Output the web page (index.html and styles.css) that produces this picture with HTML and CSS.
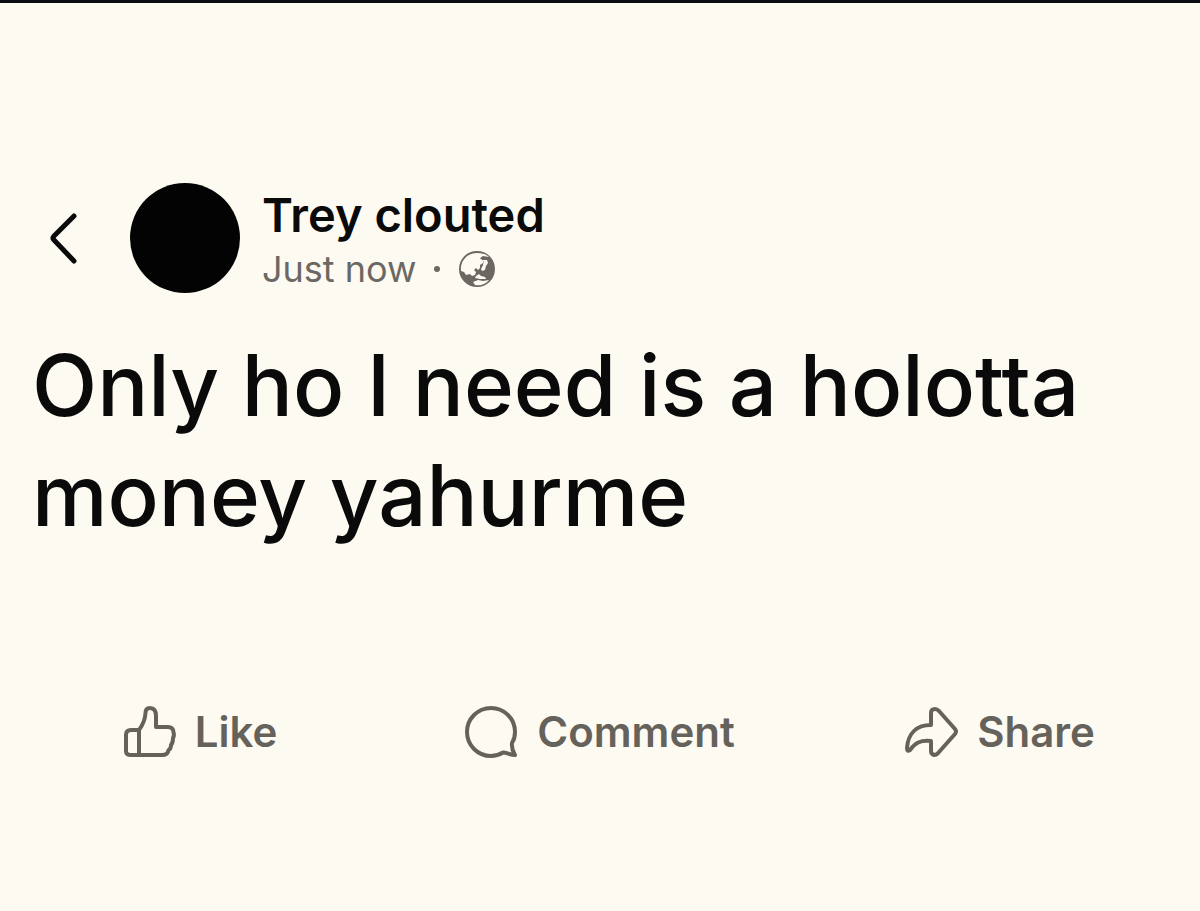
FILE: index.html
```html
<!DOCTYPE html>
<html lang="en">
<head>
    <meta charset="UTF-8">
    <meta name="viewport" content="width=device-width, initial-scale=1.0">
    <title>Trey clouted</title>
    <link rel="stylesheet" href="styles.css">
</head>
<body>
    <main class="post">
        <header class="post-header">
            <button type="button" class="back" aria-label="Back">
                <svg width="30" height="52" viewBox="0 0 30 52" fill="none" stroke="currentColor" stroke-width="5" stroke-linecap="round" stroke-linejoin="round">
                    <path d="M26 4 L6 24 Q4 26 6 28 L26 49"/>
                </svg>
            </button>
            <div class="avatar"></div>
            <div class="author">
                <h1 class="name">Trey clouted</h1>
                <div class="meta">
                    <span>Just now</span>
                    <span class="dot"></span>
                    <svg width="38" height="38" viewBox="0 0 38 38">
                        <circle cx="19" cy="19" r="18" fill="currentColor"/>
                        <path fill="#fdfaf2" d="M19 3 C24 3 28 4 31 7 L25 6 L22 8 L24 10 L26 10 L25 13 L22 15 L22 18 L20 20 L18 18 L16 20 L18 22 L17 25 L14 26 L12 24 L8 25 L6 22 L3 21 C2 11 9 3 19 3 Z"/>
                        <path fill="#fdfaf2" d="M26 10 L29 10 L30 13 L28 16 L27 20 L24 21 L23 19 L25 15 Z"/>
                        <path fill="#fdfaf2" d="M18 26 L21 24 L23 26 L27 27 L28 29 L22 29 L17 28 Z"/>
                        <path fill="#fdfaf2" d="M15 32 L20 30 L25 31 L31 30 C28 34 23 36 17 35 Z"/>
                    </svg>
                </div>
            </div>
        </header>

        <p class="text">Only ho I need is a holotta money yahurme</p>

        <footer class="actions">
            <button type="button" class="action">
                <svg width="54" height="54" viewBox="0 0 54 54" fill="none" stroke="currentColor" stroke-width="4" stroke-linejoin="round" stroke-linecap="round">
                    <path d="M16 25 Q22 17 22.500 8 Q22.500 3 27 3 Q33 3 33 11 V22 H45 Q50 22 50.500 27 Q51.500 31 50 33 Q50 38 48 40 Q48 44 45.500 45 Q45 50 39 50 H8 Q3 50 3 46 V30 Q3 25 8 25 H16 V50"/>
                </svg>
                <span>Like</span>
            </button>
            <button type="button" class="action">
                <svg width="54" height="54" viewBox="0 0 54 54" fill="none" stroke="currentColor" stroke-width="4" stroke-linejoin="round" stroke-linecap="round">
                    <path d="M38 47.500 C34 50 30 51 26 51 A24 24 0 1 1 50 27 C50 31 49 35 47 38 C46.500 42 47.500 46 50 50 C45 50 42 47.500 38 47.500 Z"/>
                </svg>
                <span>Comment</span>
            </button>
            <button type="button" class="action">
                <svg width="54" height="54" viewBox="0 0 54 54" fill="none" stroke="currentColor" stroke-width="4" stroke-linejoin="round" stroke-linecap="round">
                    <path d="M26 20 V8 Q26 4 30 4 Q32 4 34 6 L50 24 Q52 26.500 50 29 L34 47 Q32 50 29 50 Q26 49 26 46 V36 C15 35 10 38 5 45 Q2 47 2 43 C3 28 12 20 26 20 Z"/>
                </svg>
                <span>Share</span>
            </button>
        </footer>
    </main>
</body>
</html>
```
FILE: styles.css
```css
body {
    font-family: Inter, "Liberation Sans", sans-serif;
    background-color: #fdfaf2;
    color: #0a0a0a;
    margin: 0;
    border-top: 3px solid #080c10;
}

.post {
    padding: 180px 0 48px;
}

.post-header {
    display: flex;
    align-items: center;
    padding-left: 48px;
}

button {
    padding: 0;
    border: none;
    background: none;
    color: inherit;
    font-family: inherit;
    cursor: pointer;
}

svg {
    display: block;
    flex-shrink: 0;
}

.avatar {
    width: 110px;
    height: 110px;
    margin: 0 22px 0 52px;
    border-radius: 50%;
    background-color: #030303;
    flex-shrink: 0;
}

.name {
    margin: 0;
    font-size: 47px;
    line-height: 62px;
    font-weight: 600;
}

.meta {
    display: flex;
    align-items: center;
    font-size: 36px;
    line-height: 46px;
    color: #6b6863;
}

.dot {
    width: 6px;
    height: 6px;
    margin: 0 18px;
    border-radius: 50%;
    background-color: currentColor;
}

.text {
    margin: 38px 0 154px;
    padding: 0 32px;
    font-size: 85px;
    line-height: 110px;
    font-weight: 500;
}

.actions {
    display: grid;
    grid-template-columns: repeat(3, 1fr);
}

.action {
    display: flex;
    align-items: center;
    justify-content: center;
    gap: 18px;
    font-size: 42px;
    line-height: 54px;
    font-weight: 600;
    color: #65625b;
}
```
